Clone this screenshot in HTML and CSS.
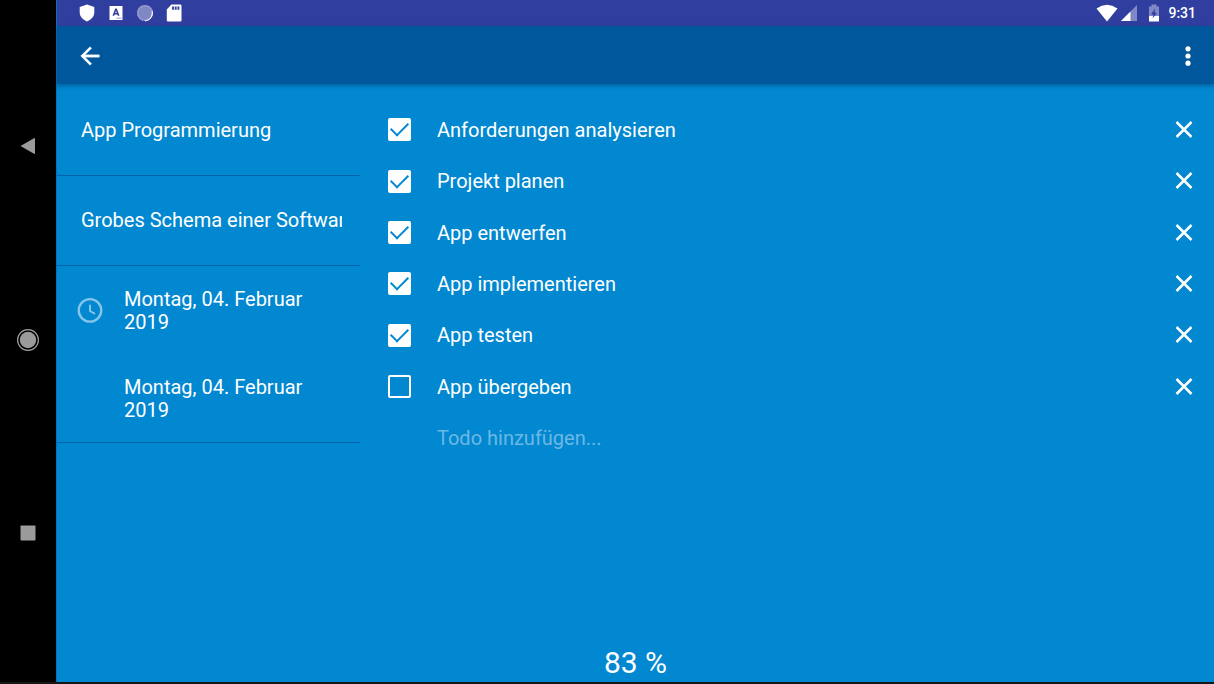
FILE: index.html
```html
<!DOCTYPE html>
<html lang="de">
<head>
<meta charset="utf-8">
<meta name="viewport" content="width=device-width, initial-scale=1">
<title>App Programmierung</title>
<link rel="stylesheet" href="styles.css">
</head>
<body>
<div class="device">
  <nav class="navbar" aria-label="System">
    <button class="nav-button" type="button" aria-label="System zurück"><svg width="24" height="24" viewBox="0 0 24 24"><path d="M4.500 12 18 4.200q1-.5 1 .6v14.400q0 1.100-1 .6z" fill="#9b9b9b"/></svg></button>
    <button class="nav-button" type="button" aria-label="Startseite"><svg width="24" height="24" viewBox="0 0 24 24"><circle cx="12" cy="12" r="10.400" fill="none" stroke="#a0a0a0" stroke-width="1.200"/><circle cx="12" cy="12" r="8.200" fill="#9b9b9b"/></svg></button>
    <button class="nav-button" type="button" aria-label="Letzte Apps"><svg width="24" height="24" viewBox="0 0 24 24"><rect x="4.500" y="4.500" width="15" height="15" rx="0.800" fill="#9b9b9b"/></svg></button>
  </nav>
  <div class="screen">
    <div class="statusbar">
      <div class="status-icons">
        <svg width="18" height="18" viewBox="0 0 18 18"><path d="M9 .5 16.300 3v5.500c0 4-3.500 7.500-7.300 9-3.800-1.500-7.300-5-7.300-9V3z" fill="#fff"/></svg>
        <svg width="18" height="18" viewBox="0 0 18 18"><path d="M2.500 2h13v14h-13z" fill="#fff"/><path d="M6.300 11.800 8.800 5.200h.4l2.500 6.600M7.300 9.800h3.400" fill="none" stroke="#303f9f" stroke-width="1.600"/><path d="M9.500 14.200h5" stroke="#7780bf" stroke-width=".8"/></svg>
        <svg width="18" height="18" viewBox="0 0 18 18"><circle cx="9" cy="9" r="8" fill="#8087c4"/><circle cx="9" cy="9" r="7.200" fill="none" stroke="#a0a7d5" stroke-width="1.400" stroke-dasharray="1.200 1"/><path d="M16.300 7A8 8 0 0 1 9 17q5-1 6.300-4.500Q16.500 10 16.300 7z" fill="#fff" stroke="#fff" stroke-width=".6"/></svg>
        <svg width="18" height="18" viewBox="0 0 18 18"><path d="M6.500.5h8.800q1.200 0 1.200 1.200v14.600q0 1.200-1.200 1.200H3q-1.200 0-1.200-1.200V5.500z" fill="#fff"/><path d="M8 2.500v3.200M10.700 2.500v3.200M13.400 2.500v3.200" stroke="#303f9f" stroke-width="1.900"/></svg>
      </div>
      <div class="status-info">
        <svg width="22" height="18" viewBox="0 0 22 18"><path d="M.5 4.500Q11-2.800 21.500 4.500L11 17.500z" fill="#fff"/></svg>
        <svg width="18" height="18" viewBox="0 0 18 18"><path d="M17 1v16H1z" fill="#8089c5"/><path d="M10.500 7.500V17H1z" fill="#fff"/></svg>
        <svg class="battery" width="12" height="18" viewBox="0 0 12 18"><path d="M3.500.5h5v2H11V12H1V2.500h2.500z" fill="#8089c5"/><path d="M1 12h10v5.500H1z" fill="#fff"/><path d="M7 4.500 3 10.500h2.500l-1 4L9 8.800H6.500z" fill="#303f9f"/></svg>
        <time class="clock">9:31</time>
      </div>
    </div>
    <header class="toolbar">
      <button class="icon-button" type="button" aria-label="Zurück"><svg width="28" height="28" viewBox="0 0 24 24"><path d="M20 11H7.830l5.590-5.590L12 4l-8 8 8 8 1.410-1.410L7.830 13H20z" fill="#fff" stroke="#fff" stroke-width=".3"/></svg></button>
      <button class="icon-button" type="button" aria-label="Weitere Optionen"><svg width="28" height="28" viewBox="0 0 28 28"><g fill="#fff"><circle cx="14" cy="6.800" r="2.600"/><circle cx="14" cy="14" r="2.600"/><circle cx="14" cy="21.200" r="2.600"/></g></svg></button>
    </header>
    <div class="content">
      <aside class="details">
        <div class="field"><input class="text-input" type="text" aria-label="Titel" value="App Programmierung"></div>
        <div class="field"><input class="text-input" type="text" aria-label="Beschreibung" value="Grobes Schema einer Software Entwicklung"></div>
        <div class="dates">
          <svg width="30" height="30" viewBox="0 0 24 24"><circle cx="12" cy="11.500" r="9" fill="none" stroke="#86c5e9" stroke-width="1.900"/><path d="M12 7v5l4 2.300" fill="none" stroke="#86c5e9" stroke-width="1.600"/></svg>
          <button class="date" type="button">Montag, 04. Februar 2019</button>
          <button class="date date-end" type="button">Montag, 04. Februar 2019</button>
        </div>
      </aside>
      <main class="main">
        <ul class="todos">
          <li class="todo"><input class="check" type="checkbox" id="t1" checked><label class="todo-label" for="t1">Anforderungen analysieren</label><button class="remove" type="button" aria-label="Anforderungen analysieren löschen"><svg width="20" height="20" viewBox="0 0 20 20"><path d="m2.500 2 15 15m0-15-15 15" stroke="#fff" stroke-width="2.500"/></svg></button></li>
          <li class="todo"><input class="check" type="checkbox" id="t2" checked><label class="todo-label" for="t2">Projekt planen</label><button class="remove" type="button" aria-label="Projekt planen löschen"><svg width="20" height="20" viewBox="0 0 20 20"><path d="m2.500 2 15 15m0-15-15 15" stroke="#fff" stroke-width="2.500"/></svg></button></li>
          <li class="todo"><input class="check" type="checkbox" id="t3" checked><label class="todo-label" for="t3">App entwerfen</label><button class="remove" type="button" aria-label="App entwerfen löschen"><svg width="20" height="20" viewBox="0 0 20 20"><path d="m2.500 2 15 15m0-15-15 15" stroke="#fff" stroke-width="2.500"/></svg></button></li>
          <li class="todo"><input class="check" type="checkbox" id="t4" checked><label class="todo-label" for="t4">App implementieren</label><button class="remove" type="button" aria-label="App implementieren löschen"><svg width="20" height="20" viewBox="0 0 20 20"><path d="m2.500 2 15 15m0-15-15 15" stroke="#fff" stroke-width="2.500"/></svg></button></li>
          <li class="todo"><input class="check" type="checkbox" id="t5" checked><label class="todo-label" for="t5">App testen</label><button class="remove" type="button" aria-label="App testen löschen"><svg width="20" height="20" viewBox="0 0 20 20"><path d="m2.500 2 15 15m0-15-15 15" stroke="#fff" stroke-width="2.500"/></svg></button></li>
          <li class="todo"><input class="check" type="checkbox" id="t6"><label class="todo-label" for="t6">App übergeben</label><button class="remove" type="button" aria-label="App übergeben löschen"><svg width="20" height="20" viewBox="0 0 20 20"><path d="m2.500 2 15 15m0-15-15 15" stroke="#fff" stroke-width="2.500"/></svg></button></li>
          <li class="todo todo-new"><input class="text-input" type="text" aria-label="Todo hinzufügen" placeholder="Todo hinzufügen..."></li>
        </ul>
      </main>
    </div>
    <footer class="progress">83 %</footer>
  </div>
</div>
</body>
</html>
```
FILE: styles.css
```css
* { box-sizing: border-box; }

body {
  margin: 0;
  background: #161616;
  color: #fff;
  font: 20px/23px Roboto, "Noto Sans", sans-serif;
}

button, input {
  margin: 0;
  padding: 0;
  border: 0;
  background: none;
  color: inherit;
  font: inherit;
}

svg { display: block; flex: none; }

.device {
  display: flex;
  min-height: 100vh;
  border-bottom: 2px solid #161616;
}

.navbar {
  flex: none;
  width: 56px;
  padding: 49px 1px 52px 0;
  display: flex;
  flex-direction: column;
  align-items: center;
  background: #000;
}

.nav-button {
  flex: 1;
  width: 100%;
  display: flex;
  align-items: center;
  justify-content: center;
}

.screen {
  flex: 1;
  min-width: 0;
  display: flex;
  flex-direction: column;
  background: #0288d1;
  border-left: 1px solid #0273b3;
}

.statusbar {
  height: 26px;
  padding: 0 18px 1px 21px;
  display: flex;
  align-items: center;
  justify-content: space-between;
  background: #303f9f;
}

.status-icons { display: flex; gap: 11px; }

.status-info { display: flex; align-items: center; gap: 2px; }

.battery { margin: 0 6px 0 8px; }

.clock { font-size: 14px; font-weight: 500; line-height: 18px; }

.toolbar {
  height: 58px;
  padding: 1px 12px 0 19px;
  display: flex;
  align-items: center;
  justify-content: space-between;
  background: #01579b;
  box-shadow: 0 2px 4px rgba(0, 40, 80, 0.4);
}

.content { flex: 1; display: flex; }

.details { width: 303px; flex: none; padding-top: 2px; }

.field {
  height: 90px;
  padding: 0 18px 2px 24px;
  display: flex;
  align-items: center;
  border-bottom: 1px solid #0162a8;
}

.text-input { width: 100%; height: 30px; outline: 0; }

.text-input::placeholder { color: #6cb8e3; opacity: 1; }

.dates {
  display: grid;
  grid-template-columns: 30px 1fr;
  column-gap: 19px;
  row-gap: 42px;
  padding: 22px 40px 20px 18px;
  align-items: center;
  border-bottom: 1px solid #0162a8;
}

.date { text-align: left; }

.date-end { grid-column: 2; }

.main { flex: 1; min-width: 0; padding: 20px 20px 0 28px; }

.todos {
  margin: 0;
  padding: 0;
  list-style: none;
  display: grid;
  grid-template-rows: repeat(7, 1fr);
  min-height: 360px;
}

.todo { display: flex; align-items: center; }

.todo-new { padding-left: 49px; }

.check {
  appearance: none;
  flex: none;
  width: 23px;
  height: 23px;
  margin-right: 26px;
  border: 2px solid #fff;
  border-radius: 2px;
  display: grid;
  place-items: center;
}

.check:checked { background: #fff; }

.check:checked::before {
  content: "";
  width: 15px;
  height: 8px;
  margin-bottom: 5px;
  border: solid #0288d1;
  border-width: 0 0 2px 2px;
  transform: rotate(-45deg);
}

.todo-label { flex: 1; padding-top: 1px; }

.progress {
  font-size: 30px;
  line-height: 36px;
  padding-bottom: 1px;
  text-align: center;
}
```
